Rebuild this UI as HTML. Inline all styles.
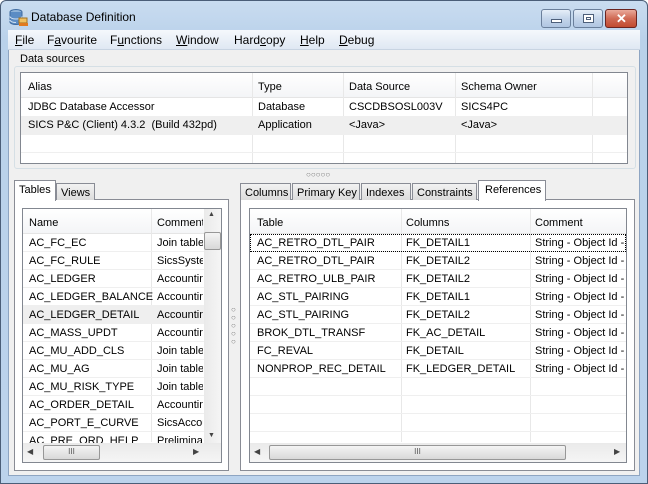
<!DOCTYPE html>
<html><head><meta charset="utf-8"><style>
*{box-sizing:border-box;margin:0;padding:0}
body{width:648px;height:484px;overflow:hidden;font-family:"Liberation Sans",sans-serif;font-size:11px;color:#000;background:#fff;position:relative}
.a{position:absolute}
#frame{left:0;top:0;width:648px;height:484px;background:linear-gradient(#c9dcf0,#b9d1ea 40px,#bcd3ec);border:1px solid #4b5e78;border-radius:6px 6px 0 0}
#client{left:8px;top:30px;width:632px;height:446px;background:#f0f0f0;border:1px solid #8ea5c2}
.menu{left:8px;top:30px;width:632px;height:20px;background:linear-gradient(#f5f8fc,#dfe8f3);border-bottom:1px solid #c8d4e2}
.menu span{position:absolute;top:3px;font-size:12px}
.btn{top:9px;height:19px;border:1px solid #6a7f9b;border-radius:3px;background:linear-gradient(#e6eef8,#c4d5ea 50%,#b0c6e2)}
.grp{border:1px solid #d5dfe5;border-radius:3px}
.tbl{background:#fff;border:1px solid #828790}
.hd{position:absolute;left:0;right:0;top:0;height:25px;background:linear-gradient(#fff,#f4f5f7);border-bottom:1px solid #e5e5e5}
.t{position:absolute;white-space:nowrap;overflow:hidden}
.vl{position:absolute;width:1px;background:#e8e8e8}
.hl{position:absolute;height:1px;background:#efefef}
.tab{position:absolute;border:1px solid #898c95;border-bottom:none;background:linear-gradient(#f2f2f2,#dcdcdc);padding:3px 0 0 4px;height:18px;white-space:nowrap;overflow:hidden}
.tab.sel{background:#fff;height:21px}
.panel{background:#fff;border:1px solid #898c95}
.sb{background:linear-gradient(90deg,#eaeaea,#f5f5f5)}
.thumb{border:1px solid #979797;border-radius:2px;background:linear-gradient(#f4f4f4,#d8d8d8)}
.r{position:absolute;left:0;height:18px;border-bottom:1px solid #efefef;white-space:nowrap}
.r span{position:absolute;top:3px;overflow:hidden}
</style></head><body>
<div id="frame" class="a"></div>
<svg class="a" style="left:9px;top:8px" width="20" height="20" viewBox="0 0 20 20">
<ellipse cx="7" cy="4" rx="6" ry="2.5" fill="#8fb3d8" stroke="#3d6aa0"/>
<path d="M1 4v10c0 1.4 2.7 2.5 6 2.5s6-1.1 6-2.5V4" fill="#5b8cc4" stroke="#3d6aa0"/>
<path d="M1 8.5c0 1.4 2.7 2.5 6 2.5s6-1.1 6-2.5M1 12c0 1.4 2.7 2.5 6 2.5" fill="none" stroke="#cfe0f2"/>
<rect x="10" y="10" width="8" height="5" fill="#f0c060" stroke="#a07020"/>
<rect x="10" y="15" width="9" height="3" fill="#e07a20"/>
</svg>
<div class="a" style="left:31px;top:10px;font-size:12px">Database Definition</div>
<div class="a btn" style="left:541px;width:30px"><div class="a" style="left:9px;top:9px;width:11px;height:4px;background:#fff;border:1px solid #4d5f7a"></div></div>
<div class="a btn" style="left:573px;width:30px"><div class="a" style="left:9px;top:4px;width:11px;height:9px;background:#fff;border:1px solid #4d5f7a"><div class="a" style="left:2px;top:2px;width:5px;height:3px;border:1px solid #4d5f7a"></div></div></div>
<div class="a btn" style="left:605px;width:32px;border-color:#6b2420;background:linear-gradient(#e9a99a,#d06a55 50%,#c14a30)"><div class="a" style="left:10px;top:1px;color:#fff;font-weight:bold;font-size:13px">✕</div></div>
<div id="client" class="a"></div>
<div class="a menu">
<span style="left:7px"><u>F</u>ile</span><span style="left:39px">F<u>a</u>vourite</span><span style="left:102px">F<u>u</u>nctions</span><span style="left:168px"><u>W</u>indow</span><span style="left:226px">Hard<u>c</u>opy</span><span style="left:292px"><u>H</u>elp</span><span style="left:331px"><u>D</u>ebug</span>
</div>
<div class="a grp" style="left:14px;top:66px;width:622px;height:103px"></div>
<div class="a" style="left:18px;top:53px;background:#f0f0f0;padding:0 2px">Data sources</div>
<div class="a tbl" style="left:20px;top:72px;width:608px;height:92px">
<div class="hd"></div>
<div class="vl" style="left:231px;top:0;height:90px"></div><div class="vl" style="left:322px;top:0;height:90px"></div><div class="vl" style="left:434px;top:0;height:90px"></div><div class="vl" style="left:571px;top:0;height:90px"></div>
<div class="t" style="left:7px;top:8px">Alias</div><div class="t" style="left:237px;top:8px">Type</div><div class="t" style="left:328px;top:8px">Data Source</div><div class="t" style="left:440px;top:8px">Schema Owner</div>
<div class="a" style="left:0;right:0;top:43px;height:18px;background:#efefef"></div>
<div class="hl" style="left:0;right:0;top:43px"></div><div class="hl" style="left:0;right:0;top:61px"></div><div class="hl" style="left:0;right:0;top:79px"></div>
<div class="t" style="left:7px;top:28px">JDBC Database Accessor</div><div class="t" style="left:237px;top:28px">Database</div><div class="t" style="left:328px;top:28px">CSCDBSOSL003V</div><div class="t" style="left:440px;top:28px">SICS4PC</div>
<div class="t" style="left:7px;top:46px">SICS P&amp;C (Client) 4.3.2&nbsp; (Build 432pd)</div><div class="t" style="left:237px;top:46px">Application</div><div class="t" style="left:328px;top:46px">&lt;Java&gt;</div><div class="t" style="left:440px;top:46px">&lt;Java&gt;</div>
</div>
<div class="a" style="left:306px;top:170px;font-size:8px;color:#777">○○○○○</div>

<div class="a panel" style="left:14px;top:199px;width:215px;height:272px"></div>
<div class="tab sel" style="left:14px;top:180px;width:42px">Tables</div>
<div class="tab" style="left:56px;top:183px;width:39px;height:17px">Views</div>
<div class="a tbl" style="left:22px;top:208px;width:200px;height:255px;overflow:hidden">
<div class="hd"></div>
<div class="vl" style="left:128px;top:0;height:233px"></div>
<div class="t" style="left:6px;top:8px">Name</div><div class="t" style="left:134px;top:8px;width:46px">Comment</div>
<div class="r" style="top:25px;width:181px"><span style="left:6px">AC_FC_EC</span><span style="left:134px;width:46px">Join table</span></div>
<div class="r" style="top:43px;width:181px"><span style="left:6px">AC_FC_RULE</span><span style="left:134px;width:46px">SicsSystem</span></div>
<div class="r" style="top:61px;width:181px"><span style="left:6px">AC_LEDGER</span><span style="left:134px;width:46px">Accounting</span></div>
<div class="r" style="top:79px;width:181px"><span style="left:6px">AC_LEDGER_BALANCE</span><span style="left:134px;width:46px">Accounting</span></div>
<div class="r" style="top:97px;width:181px;background:#efefef"><span style="left:6px">AC_LEDGER_DETAIL</span><span style="left:134px;width:46px">Accounting</span></div>
<div class="r" style="top:115px;width:181px"><span style="left:6px">AC_MASS_UPDT</span><span style="left:134px;width:46px">Accounting</span></div>
<div class="r" style="top:133px;width:181px"><span style="left:6px">AC_MU_ADD_CLS</span><span style="left:134px;width:46px">Join table</span></div>
<div class="r" style="top:151px;width:181px"><span style="left:6px">AC_MU_AG</span><span style="left:134px;width:46px">Join table</span></div>
<div class="r" style="top:169px;width:181px"><span style="left:6px">AC_MU_RISK_TYPE</span><span style="left:134px;width:46px">Join table</span></div>
<div class="r" style="top:187px;width:181px"><span style="left:6px">AC_ORDER_DETAIL</span><span style="left:134px;width:46px">Accounting</span></div>
<div class="r" style="top:205px;width:181px"><span style="left:6px">AC_PORT_E_CURVE</span><span style="left:134px;width:46px">SicsAccount</span></div>
<div class="r" style="top:223px;width:181px"><span style="left:6px">AC_PRE_ORD_HELP</span><span style="left:134px;width:46px">Preliminary</span></div>
<div class="a sb" style="left:181px;top:0;width:17px;height:234px"></div>
<div class="a" style="left:185px;top:2px;font-size:7px;color:#444">▲</div>
<div class="a thumb" style="left:181px;top:23px;width:17px;height:18px"></div>
<div class="a" style="left:185px;top:223px;font-size:7px;color:#444">▼</div>
<div class="a" style="left:0;top:234px;width:198px;height:19px;background:linear-gradient(#eaeaea,#f5f5f5)"></div>
<div class="a" style="left:4px;top:238px;font-size:8px;color:#444">◀</div>
<div class="a thumb" style="left:20px;top:236px;width:57px;height:15px;text-align:center;font-size:8px;line-height:12px;color:#555">III</div>
<div class="a" style="left:170px;top:238px;font-size:8px;color:#444">▶</div>
</div>
<div class="a" style="left:231px;top:306px;font-size:8px;color:#777;line-height:8px">○<br>○<br>○<br>○<br>○</div>

<div class="a panel" style="left:240px;top:199px;width:395px;height:272px"></div>
<div class="tab" style="left:240px;top:183px;width:51px;height:17px">Columns</div>
<div class="tab" style="left:292px;top:183px;width:68px;height:17px">Primary Key</div>
<div class="tab" style="left:361px;top:183px;width:50px;height:17px">Indexes</div>
<div class="tab" style="left:412px;top:183px;width:65px;height:17px">Constraints</div>
<div class="tab sel" style="left:478px;top:180px;width:68px;padding-left:6px">References</div>
<div class="a tbl" style="left:249px;top:208px;width:378px;height:255px;overflow:hidden">
<div class="hd"></div>
<div class="vl" style="left:151px;top:0;height:233px"></div><div class="vl" style="left:280px;top:0;height:233px"></div>
<div class="t" style="left:7px;top:8px">Table</div><div class="t" style="left:156px;top:8px">Columns</div><div class="t" style="left:285px;top:8px">Comment</div>
<div class="r" style="top:25px;width:376px"><span style="left:7px">AC_RETRO_DTL_PAIR</span><span style="left:156px">FK_DETAIL1</span><span style="left:285px;width:91px">String - Object Id -</span></div>
<div class="r" style="top:43px;width:376px"><span style="left:7px">AC_RETRO_DTL_PAIR</span><span style="left:156px">FK_DETAIL2</span><span style="left:285px;width:91px">String - Object Id -</span></div>
<div class="r" style="top:61px;width:376px"><span style="left:7px">AC_RETRO_ULB_PAIR</span><span style="left:156px">FK_DETAIL2</span><span style="left:285px;width:91px">String - Object Id -</span></div>
<div class="r" style="top:79px;width:376px"><span style="left:7px">AC_STL_PAIRING</span><span style="left:156px">FK_DETAIL1</span><span style="left:285px;width:91px">String - Object Id -</span></div>
<div class="r" style="top:97px;width:376px"><span style="left:7px">AC_STL_PAIRING</span><span style="left:156px">FK_DETAIL2</span><span style="left:285px;width:91px">String - Object Id -</span></div>
<div class="r" style="top:115px;width:376px"><span style="left:7px">BROK_DTL_TRANSF</span><span style="left:156px">FK_AC_DETAIL</span><span style="left:285px;width:91px">String - Object Id -</span></div>
<div class="r" style="top:133px;width:376px"><span style="left:7px">FC_REVAL</span><span style="left:156px">FK_DETAIL</span><span style="left:285px;width:91px">String - Object Id -</span></div>
<div class="r" style="top:151px;width:376px"><span style="left:7px">NONPROP_REC_DETAIL</span><span style="left:156px">FK_LEDGER_DETAIL</span><span style="left:285px;width:91px">String - Object Id -</span></div>
<div class="r" style="top:169px;width:376px"></div>
<div class="r" style="top:187px;width:376px"></div>
<div class="r" style="top:205px;width:376px"></div>
<div class="a" style="left:0;top:25px;width:376px;height:18px;border:1px dotted #000"></div>
<div class="a" style="left:0;top:234px;width:376px;height:19px;background:linear-gradient(#eaeaea,#f5f5f5)"></div>
<div class="a" style="left:4px;top:238px;font-size:8px;color:#444">◀</div>
<div class="a thumb" style="left:19px;top:236px;width:297px;height:15px;text-align:center;font-size:8px;line-height:12px;color:#555">III</div>
<div class="a" style="left:364px;top:238px;font-size:8px;color:#444">▶</div>
</div>
</body></html>
